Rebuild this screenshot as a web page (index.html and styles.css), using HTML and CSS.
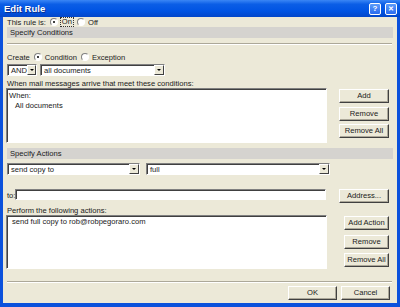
FILE: index.html
```html
<!DOCTYPE html>
<html lang="en">
<head>
    <meta charset="UTF-8">
    <title>Edit Rule</title>
    <link rel="stylesheet" href="styles.css">
</head>
<body>
    <div class="window">
        <div class="titlebar">
            <span class="title">Edit Rule</span>
            <span class="tb-btn">?</span>
            <span class="tb-btn tb-close">&#x2715;</span>
        </div>
        <div class="frame">
            <div class="row status-row">
                <span>This rule is:</span>
                <span class="radio checked"></span><span class="focus">On</span>
                <span class="radio"></span><span>Off</span>
            </div>
            <div class="band">Specify Conditions</div>
            <div class="sep"></div>

            <div class="row create-row">
                <span>Create</span>
                <span class="radio checked"></span><span>Condition</span>
                <span class="radio"></span><span>Exception</span>
            </div>
            <div class="row select-row">
                <div class="select sel-and"><span class="sel-text">AND</span><span class="arrow"></span></div>
                <div class="select sel-docs"><span class="sel-text">all documents</span><span class="arrow"></span></div>
            </div>
            <div class="label">When mail messages arrive that meet these conditions:</div>
            <div class="list-block">
                <div class="listbox list-cond">
                    <div>When:</div>
                    <div class="indent">All documents</div>
                </div>
                <div class="btn-col">
                    <div class="btn">Add</div>
                    <div class="btn">Remove</div>
                    <div class="btn">Remove All</div>
                </div>
            </div>

            <div class="band band-actions">Specify Actions</div>
            <div class="row select-row2">
                <div class="select sel-send"><span class="sel-text">send copy to</span><span class="arrow"></span></div>
                <div class="select sel-full"><span class="sel-text">full</span><span class="arrow"></span></div>
            </div>
            <div class="row to-row">
                <span class="to-label">to:</span>
                <div class="field"></div>
                <div class="btn btn-address">Address...</div>
            </div>
            <div class="label">Perform the following actions:</div>
            <div class="list-block list-block2">
                <div class="listbox list-actions">
                    <div>send full copy to rob@robpegoraro.com</div>
                </div>
                <div class="btn-col btn-col2">
                    <div class="btn">Add Action</div>
                    <div class="btn">Remove</div>
                    <div class="btn">Remove All</div>
                </div>
            </div>

            <div class="sep sep-bottom"></div>
            <div class="row footer">
                <div class="btn btn-ok">OK</div>
                <div class="btn btn-cancel">Cancel</div>
            </div>
        </div>
    </div>
</body>
</html>
```

FILE: styles.css
```css
body {
    margin: 0;
    font-family: "Liberation Sans", Arial, sans-serif;
    font-size: 7.6px;
    color: #1a1a1a;
}

.window {
    width: 400px;
    height: 307px;
    display: flex;
    flex-direction: column;
}

.titlebar {
    height: 17px;
    display: flex;
    align-items: center;
    padding: 0 3px 0 4px;
    background: linear-gradient(#3a86f5 0%, #0b5ee6 25%, #0054e3 65%, #0246c9 100%);
}

.title {
    flex: 1;
    color: #fff;
    font-weight: bold;
    font-size: 9.5px;
    text-shadow: 1px 1px #0a2f8a;
}

.tb-btn {
    width: 10px;
    height: 10px;
    margin-left: 4px;
    border: 1px solid #fff;
    border-radius: 2px;
    background: linear-gradient(#5c9cfa, #2a6bef);
    color: #fff;
    font-size: 8px;
    font-weight: bold;
    line-height: 10px;
    text-align: center;
}

.tb-close {
    font-size: 7px;
}

.frame {
    flex: 1;
    background: #ece9d8;
    border: 3px solid #0b51dc;
    border-top: none;
    border-bottom-width: 4px;
    padding: 0 4px;
    display: flex;
    flex-direction: column;
}

.row {
    display: flex;
    align-items: center;
}

.status-row,
.create-row {
    height: 10px;
}

.create-row {
    margin-top: 7px;
}

.radio {
    width: 6px;
    height: 6px;
    margin: 0 3px 0 4px;
    border: 1px solid;
    border-color: #808080 #fff #fff #808080;
    border-radius: 50%;
    background: #fff;
    position: relative;
}

.radio.checked::after {
    content: "";
    position: absolute;
    left: 2px;
    top: 2px;
    width: 2px;
    height: 2px;
    border-radius: 50%;
    background: #000;
}

.focus {
    padding: 0 1px;
    outline: 1px dotted #333;
    line-height: 8px;
}

.band {
    height: 11px;
    line-height: 11px;
    padding-left: 3px;
    background: #d5d3cf;
}

.band-actions {
    margin-top: 5px;
}

.sep {
    margin-top: 5px;
    border-top: 1px solid #aca899;
    border-bottom: 1px solid #fff;
    margin-right: 1px;
}

.select-row {
    margin-top: 2px;
    gap: 3px;
}

.select-row2 {
    margin-top: 4px;
    gap: 6px;
}

.select {
    box-sizing: border-box;
    height: 12px;
    display: flex;
    align-items: center;
    background: #fff;
    border: 1px solid;
    border-color: #808080 #fff #fff #808080;
    box-shadow: inset 1px 1px #404040;
}

.sel-text {
    flex: 1;
    padding-left: 3px;
    padding-top: 1px;
}

.arrow {
    box-sizing: border-box;
    width: 10px;
    height: 10px;
    background: #ece9d8;
    border: 1px solid;
    border-color: #fff #404040 #404040 #fff;
    display: flex;
    align-items: center;
    justify-content: center;
}

.arrow::after {
    content: "";
    border-left: 2px solid transparent;
    border-right: 2px solid transparent;
    border-top: 2px solid #000;
}

.sel-and { width: 30px; }
.sel-docs { width: 125px; }
.sel-send { width: 133px; }
.sel-full { width: 184px; }

.label {
    margin-top: 3px;
    height: 9px;
    line-height: 9px;
}

.list-block {
    display: flex;
    height: 55px;
}

.list-block2 {
    height: 54px;
}

.listbox {
    box-sizing: border-box;
    width: 321px;
    margin-left: -1px;
    padding: 2px 2px;
    line-height: 10px;
    background: #fff;
    border: 1px solid;
    border-color: #808080 #fff #fff #808080;
    box-shadow: inset 1px 1px #404040;
}

.list-actions {
    padding: 1px 5px;
}

.indent {
    padding-left: 6px;
}

.btn-col {
    display: flex;
    flex-direction: column;
    gap: 3.5px;
    margin: 1px 0 0 12px;
    width: 50px;
}

.btn-col2 {
    margin-left: 17px;
    width: 45px;
    gap: 4.5px;
}

.btn {
    box-sizing: border-box;
    height: 14px;
    line-height: 12px;
    text-align: center;
    background: #ece9d8;
    border: 1px solid;
    border-color: #fff #404040 #404040 #fff;
    box-shadow: inset -1px -1px #aca899;
}

.to-row {
    margin-top: 14px;
    align-items: flex-start;
}

.to-label {
    width: 8px;
    line-height: 13px;
}

.field {
    box-sizing: border-box;
    width: 311px;
    height: 11px;
    background: #fff;
    border: 1px solid;
    border-color: #808080 #fff #fff #808080;
    box-shadow: inset 1px 1px #404040;
}

.btn-address {
    width: 50px;
    margin-left: 13px;
}

.sep-bottom {
    margin-top: 12px;
}

.footer {
    margin-top: 3px;
    justify-content: flex-end;
    gap: 4px;
    padding-right: 3px;
}

.btn-ok,
.btn-cancel {
    width: 49px;
}
```
